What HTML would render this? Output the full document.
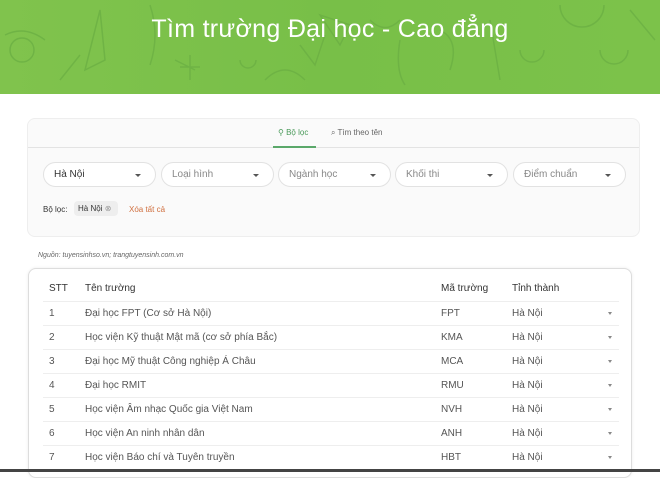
<!DOCTYPE html>
<html><head><meta charset="utf-8"><style>
*{margin:0;padding:0;box-sizing:border-box}
body{width:660px;height:472px;overflow:hidden;background:#fff;font-family:"Liberation Sans",sans-serif;position:relative;color:#333}
.banner{position:absolute;left:0;top:0;width:660px;height:94px;background:linear-gradient(90deg,#80c34d,#78bf48 50%,#7cc24a);overflow:hidden}
.banner h1{position:absolute;left:0;right:0;top:15px;text-align:center;color:#fff;font-weight:normal;font-size:25px;letter-spacing:0.3px}
.card{position:absolute;left:27px;top:118px;width:613px;height:119px;background:#fafafa;border:1px solid #eee;border-radius:8px}
.tabline{position:absolute;left:0;right:0;top:28px;border-top:1px solid #e3e3e3}
.tab{position:absolute;top:9px;font-size:8px;color:#666}
.ul{position:absolute;left:245px;top:27px;width:43px;height:2px;background:#5aa86a}
.dd{position:absolute;top:43px;height:25px;width:113px;border:1px solid #e2e2e2;border-radius:13px;background:#fff;font-size:10px;color:#888;padding:6px 0 0 10px}
.dd:after{content:"";position:absolute;right:14px;top:11px;border-left:3px solid transparent;border-right:3px solid transparent;border-top:3px solid #555}
.t2{position:absolute;left:28px;top:268px;width:604px;height:210px;border:1px solid #ddd;border-radius:8px;background:#fff;box-shadow:0 0 3px rgba(0,0,0,.08)}
.row{position:absolute;left:14px;width:576px;height:24px;border-top:1px solid #eee;font-size:10px;color:#555}
.row span{position:absolute;top:6px}
.row i{position:absolute;left:565px;top:10px;border-left:2.5px solid transparent;border-right:2.5px solid transparent;border-top:3px solid #888}
</style></head><body>
<div class="banner">
<svg width="660" height="94" style="position:absolute;left:0;top:0" fill="none" stroke="#6cb044" stroke-width="1.5" opacity=".8">
<path d="M5 35 q20 -10 40 5 M10 50 a12 12 0 1 0 24 0 a12 12 0 1 0 -24 0 M100 10 l-15 60 l20 -10 z M150 5 q10 30 0 60 M175 60 l20 10 M190 55 v25 M180 67 h20 M240 60 a8 8 0 1 0 16 0 M300 45 l15 20 l10 -30 M320 15 l30 10 l-10 20z M400 40 q-5 30 5 45 M440 30 q20 10 10 40 M490 20 l10 60 M520 50 a12 12 0 1 0 24 0 M560 5 a22 22 0 1 0 44 0 M600 50 a14 14 0 1 0 28 0 M630 10 l25 30 M60 80 l20 -25 M265 80 q20 -20 40 0 M370 20 q15 15 30 0"/>
</svg>
<h1>Tìm trường Đại học - Cao đẳng</h1>
</div>
<div class="card">
<div class="tab" style="left:250px;color:#4a9a5a">⚲ Bộ lọc</div>
<div class="tab" style="left:303px">⌕ Tìm theo tên</div>
<div class="tabline"></div><div class="ul"></div>
<div class="dd" style="left:15px;color:#333">Hà Nội</div>
<div class="dd" style="left:133px">Loại hình</div>
<div class="dd" style="left:250px">Ngành học</div>
<div class="dd" style="left:367px">Khối thi</div>
<div class="dd" style="left:485px">Điểm chuẩn</div>
<div style="position:absolute;left:15px;top:86px;font-size:8px;color:#333">Bộ lọc:</div>
<div style="position:absolute;left:46px;top:82px;height:15px;width:44px;background:#eee;border-radius:4px;font-size:8px;padding:3px 0 0 4px">Hà Nội <span style="color:#999">⊗</span></div>
<div style="position:absolute;left:101px;top:86px;font-size:8px;color:#d07040">Xóa tất cả</div>
</div>
<div style="position:absolute;left:38px;top:252px;font-size:7px;font-style:italic;color:#666">Nguồn: tuyensinhso.vn; trangtuyensinh.com.vn</div>
<div class="t2">
<div class="row" style="top:8px;border-top:none;color:#333"><span style="left:6px">STT</span><span style="left:42px">Tên trường</span><span style="left:398px">Mã trường</span><span style="left:469px">Tỉnh thành</span></div>
<div class="row" style="top:32px"><span style="left:6px">1</span><span style="left:42px">Đại học FPT (Cơ sở Hà Nội)</span><span style="left:398px">FPT</span><span style="left:469px">Hà Nội</span><i></i></div>
<div class="row" style="top:56px"><span style="left:6px">2</span><span style="left:42px">Học viện Kỹ thuật Mật mã (cơ sở phía Bắc)</span><span style="left:398px">KMA</span><span style="left:469px">Hà Nội</span><i></i></div>
<div class="row" style="top:80px"><span style="left:6px">3</span><span style="left:42px">Đại học Mỹ thuật Công nghiệp Á Châu</span><span style="left:398px">MCA</span><span style="left:469px">Hà Nội</span><i></i></div>
<div class="row" style="top:104px"><span style="left:6px">4</span><span style="left:42px">Đại học RMIT</span><span style="left:398px">RMU</span><span style="left:469px">Hà Nội</span><i></i></div>
<div class="row" style="top:128px"><span style="left:6px">5</span><span style="left:42px">Học viện Âm nhạc Quốc gia Việt Nam</span><span style="left:398px">NVH</span><span style="left:469px">Hà Nội</span><i></i></div>
<div class="row" style="top:152px"><span style="left:6px">6</span><span style="left:42px">Học viện An ninh nhân dân</span><span style="left:398px">ANH</span><span style="left:469px">Hà Nội</span><i></i></div>
<div class="row" style="top:176px"><span style="left:6px">7</span><span style="left:42px">Học viện Báo chí và Tuyên truyền</span><span style="left:398px">HBT</span><span style="left:469px">Hà Nội</span><i></i></div>
</div>
<div style="position:absolute;left:0;top:469px;width:660px;height:3px;background:#444"></div>
</body></html>
